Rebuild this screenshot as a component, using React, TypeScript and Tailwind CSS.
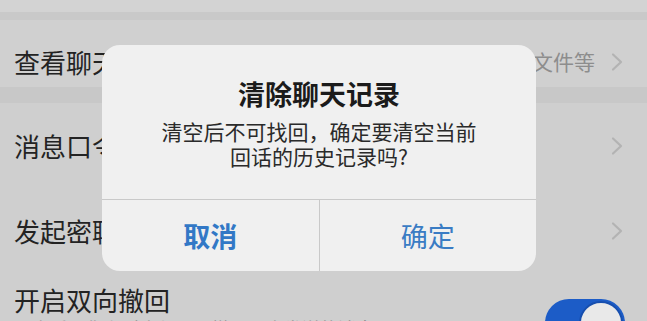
import React from 'react';

const font = { fontFamily: '"Noto Sans CJK SC", "Noto Sans", sans-serif' };

const Chevron: React.FC = () => (
  <svg width="14" height="20" viewBox="0 0 14 20" fill="none" className="shrink-0">
    <path d="M3 2.5 L11 10 L3 17.5" stroke="#b3b3b3" strokeWidth="2.2" strokeLinecap="round" strokeLinejoin="round" />
  </svg>
);

const ConfirmDialog: React.FC = () => (
  <div className="absolute left-[102px] top-[45px] w-[434px] h-[226px] rounded-[18px] bg-[#f0f0f0] flex flex-col overflow-hidden">
    <div className="h-[155px] flex flex-col items-center pt-[34px] border-b border-[#c9c9c9]">
      <h2 className="text-[27px] leading-[30px] font-bold text-[#1b1b1b]">清除聊天记录</h2>
      <p className="mt-[10px] text-[21px] leading-[25px] text-[#2a2a2a] text-center">
        清空后不可找回，确定要清空当前
        <br />
        回话的历史记录吗?
      </p>
    </div>
    <div className="flex-1 flex">
      <button className="flex-1 flex items-center justify-center text-[27px] font-bold text-[#3278c6] border-r border-[#c9c9c9] pt-[2px]">
        取消
      </button>
      <button className="flex-1 flex items-center justify-center text-[27px] text-[#3a7cc4] pt-[2px]">
        确定
      </button>
    </div>
  </div>
);

export default function App() {
  return (
    <div className="relative w-[647px] h-[321px] overflow-hidden bg-[#cfcfcf]" style={font}>
      <div className="h-[12px] bg-[#d3d3d3]" />
      <div className="h-[8px] bg-[#c9c9c9]" />

      <div className="h-[67px] bg-[#d0d0d0] flex items-start pt-[28px] pl-[14px] pr-[23px]">
        <span className="text-[26px] leading-[28px] text-[#232323]">查看聊天内容</span>
        <div className="ml-auto flex items-center gap-[15px] h-[28px]">
          <span className="text-[21px] text-[#8d8d8d]">图片、视频、文件等</span>
          <Chevron />
        </div>
      </div>

      <div className="h-[16px] bg-[#c8c8c8]" />

      <div className="h-[85px] bg-[#cfcfcf] flex items-center pl-[14px] pr-[23px] pt-[1px]">
        <span className="text-[26px] leading-[28px] text-[#232323]">消息口令</span>
        <div className="ml-auto">
          <Chevron />
        </div>
      </div>

      <div className="h-[85px] bg-[#cfcfcf] flex items-center pl-[14px] pr-[23px] pt-[1px]">
        <span className="text-[26px] leading-[28px] text-[#232323]">发起密聊</span>
        <div className="ml-auto">
          <Chevron />
        </div>
      </div>

      <div className="bg-[#cfcfcf] flex items-start pl-[14px] pr-[22px] pt-[13px]">
        <div className="flex flex-col">
          <span className="text-[26px] leading-[28px] text-[#232323]">开启双向撤回</span>
          <span className="mt-[3px] text-[18px] leading-[22px] text-[#8a8a8a]">开启后，你和对方都可以撤回双方发送的消息</span>
        </div>
        <div className="ml-auto mt-[13px] w-[80px] h-[48px] rounded-full bg-[#1c5cc7] p-[2px] flex justify-end">
          <div className="w-[44px] h-[44px] rounded-full bg-[#e9e9e9] border-[2px] border-[#174fae]" />
        </div>
      </div>

      <ConfirmDialog />
    </div>
  );
}
